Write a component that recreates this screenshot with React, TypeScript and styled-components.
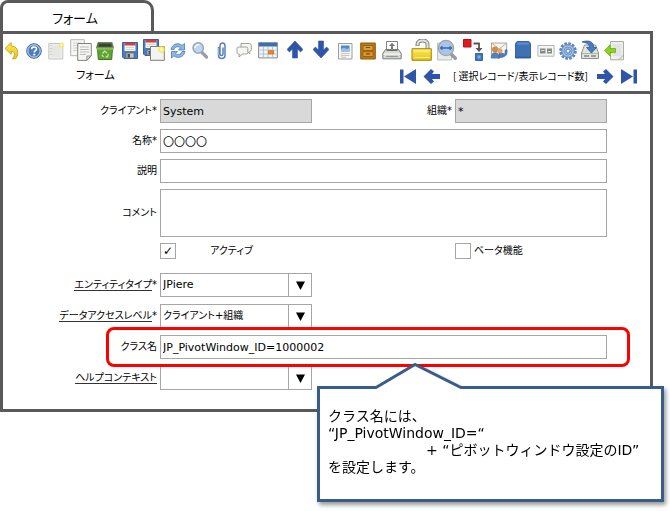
import React from "react";
import styled, { createGlobalStyle } from "styled-components";

const LINE = "#595959";
const BLUE = "#2f55a8";

const GlobalStyle = createGlobalStyle`
  * { box-sizing: border-box; }
  body {
    margin: 0;
    background: #fff;
    color: #000;
    font-family: "DejaVu Sans", "Noto Sans CJK JP", sans-serif;
    font-size: 11px;
    line-height: 16px;
  }
  input, select, textarea, button { font: inherit; color: inherit; margin: 0; }
`;

const Page = styled.main`
  min-height: 100vh;
  padding: 0 17px 99px 0;
`;

const Tab = styled.h1`
  width: 154px;
  height: 31px;
  margin: 0;
  padding: 6px 4px 0 0;
  border: 3px solid ${LINE};
  border-bottom: 0;
  border-radius: 8px 10px 0 0;
  font-size: 13px;
  font-weight: 400;
  line-height: 18px;
  text-align: center;
  font-family: "Noto Sans CJK JP", sans-serif;
  font-feature-settings: "palt";
`;

const Panel = styled.section`
  border: 3px solid ${LINE};
`;

const Header = styled.header`
  border-bottom: 3px solid ${LINE};
  padding-top: 5px;
`;

const Toolbar = styled.div`
  display: flex;
  height: 22px;
`;

const ToolButton = styled.button<{ $before: number }>`
  display: flex;
  flex: none;
  margin-left: ${(p) => p.$before}px;
  padding: 0;
  border: 0;
  background: none;
`;

const StatusRow = styled.div`
  display: flex;
  align-items: center;
  height: 30px;
  padding: 0 12px 0 73px;
  font-family: "Noto Sans CJK JP", sans-serif;
  font-feature-settings: "palt";
`;

const WindowName = styled.span`
  margin-right: auto;
  padding-bottom: 4px;
`;

const Records = styled.span`
  margin: 0 9px 0 13px;
  font-size: 10px;
`;

const NavButton = styled.button`
  display: flex;
  padding: 0;
  border: 0;
  background: none;
  & + & { margin-left: 7px; }
`;

const Form = styled.form`
  display: flex;
  flex-direction: column;
  gap: 6px;
  padding: 5px 43px 19px 0;
`;

const Group = styled.div`
  display: flex;
  flex-direction: column;
  gap: 7px;
  padding-top: 8px;
`;

const Row = styled.div`
  position: relative;
  display: grid;
  grid-template-columns: 157px 1fr 143px 1fr;
  align-items: center;
`;

const Label = styled.label<{ $link?: boolean }>`
  padding-right: 3px;
  text-align: right;
  white-space: nowrap;
  font-size: 10px;
  font-feature-settings: "palt";
  span {
    border-bottom: ${(p) => (p.$link ? "1px solid #333" : "0")};
  }
`;

const Field = styled.input<{ $wide?: boolean }>`
  grid-column: ${(p) => (p.$wide ? "2 / -1" : "auto")};
  width: 100%;
  min-width: 0;
  height: 24px;
  padding: 0 2px;
  border: 1px solid #a6a6a6;
  border-radius: 0;
  background: #fff;
  &:read-only { background: #d9d9d9; }
`;

const Memo = styled.textarea`
  grid-column: 2 / -1;
  width: 100%;
  height: 48px;
  border: 1px solid #a6a6a6;
  background: #fff;
  resize: none;
`;

const Combo = styled.div<{ $small?: boolean }>`
  position: relative;
  select {
    display: block;
    width: 100%;
    height: 24px;
    padding: 0 26px 0 2px;
    border: 1px solid #a6a6a6;
    border-radius: 0;
    background: #fff;
    appearance: none;
    font-size: ${(p) => (p.$small ? 10 : 11)}px;
    font-feature-settings: "palt";
  }
`;

const Arrow = styled.span`
  position: absolute;
  top: 1px;
  right: 1px;
  bottom: 1px;
  display: flex;
  align-items: center;
  justify-content: center;
  width: 23px;
  border-left: 1px solid #a6a6a6;
  pointer-events: none;
`;

const CheckCell = styled.div<{ $gap: number }>`
  display: flex;
  align-items: center;
  gap: ${(p) => p.$gap}px;
  height: 16px;
  white-space: nowrap;
`;

const CheckBox = styled.input`
  display: grid;
  place-items: center;
  flex: none;
  width: 16px;
  height: 16px;
  border: 1px solid #a6a6a6;
  background: #fff;
  appearance: none;
  &:checked::before {
    content: "✓";
    font-size: 12px;
    font-weight: 700;
    line-height: 14px;
  }
`;

const Highlight = styled.div`
  position: absolute;
  z-index: 1;
  inset: -8px -23px -8px 103px;
  border: 3px solid #f00;
  border-radius: 8px;
  pointer-events: none;
`;

const Callout = styled.aside`
  position: absolute;
  z-index: 2;
  top: 51px;
  right: -57px;
  width: 347px;
  height: 116px;
  padding: 19px 8px;
  border: 3px solid #385d8a;
  background: #fff;
  filter: drop-shadow(2px 3px 2px rgba(0, 0, 0, 0.4));
  font-size: 14px;
  line-height: 17px;
  p { margin: 0; white-space: nowrap; }
`;

const Indented = styled.p`
  padding-left: 98px;
`;

const Pointer = styled.svg`
  position: absolute;
  top: -26px;
  left: 54px;
`;

const Defs = styled.svg`
  position: absolute;
  width: 0;
  height: 0;
`;

const arrowUp = <path d="M8 2 16 10.5 13.6 13 10.5 10V19H5.5V10L2.4 13 0 10.5Z" fill={BLUE} stroke={BLUE} strokeWidth=".6" />;

const floppy = (
  <>
    <path d="M.5.5h15v16H2L.5 15Z" fill="#4a7cc0" stroke="#3465a4" />
    <path d="M2.5 1h11v8h-11z" fill="#f4f4f2" />
    <path d="M2.5 1h11v2.5h-11z" fill="#e23a32" />
    <path d="M4 5.5h8M4 7.5h8" stroke="#d5d7d5" />
    <path d="M4 11h8v5H4z" fill="#c6c9c4" stroke="#666" strokeWidth=".7" />
    <path d="M5.5 12H8v3.5H5.5z" fill="#4a4d4b" />
  </>
);

const sparkle = (cx: number, cy: number, r: number) => (
  <>
    <circle cx={cx} cy={cy} r={r} fill="#f8e93d" opacity=".75" />
    <circle cx={cx} cy={cy} r={r / 2.2} fill="#fffbb8" />
  </>
);

type Tool = { name: string; w: number; before: number; art: React.ReactNode };

const tools: Tool[] = [
  {
    name: "元に戻す", w: 16, before: 1,
    art: <path d="M1 9.5 7.2 3.5V7C13 7.2 16 12.5 12 19.5L8.5 20C11.5 16 11 12.5 7.2 12.2V15.5Z" fill="url(#gold)" stroke="#c29a08" strokeWidth=".8" />,
  },
  {
    name: "ヘルプ", w: 16, before: 6,
    art: (
      <>
        <circle cx="8" cy="12" r="7.3" fill="#4f7dba" stroke="#3d6cab" />
        <circle cx="8" cy="12" r="6.2" fill="none" stroke="#dce8f5" strokeWidth=".9" />
        <path d="M5.6 10.3C5.6 7.2 10.5 7.3 10.5 10 10.5 11.6 8.2 11.8 8.2 13.5" fill="none" stroke="#fff" strokeWidth="1.6" />
        <path d="M7.2 14.8h2v1.6h-2z" fill="#fff" />
      </>
    ),
  },
  {
    name: "新規", w: 16, before: 6,
    art: (
      <>
        <path d="M.8 4.5h14V20H.8z" fill="#eeeeec" stroke="#c4c6c1" />
        <path d="M2.8 6.5h10V18h-10z" fill="#e6e6e4" />
        <path d="M3 6v12" stroke="#b5b5b5" strokeDasharray="1 2" />
        {sparkle(13.5, 6, 2.6)}
      </>
    ),
  },
  {
    name: "コピー", w: 22, before: 6,
    art: (
      <>
        <path d="M.7.7h13.6v16H.7z" fill="#f7f7f6" stroke="#b4b6b1" />
        <path d="M3 4h8M3 6.5h8M3 9h5M3 11.5h5" stroke="#d0d0ce" />
        <path d="M7.7 4.5h13.6V17l-4.5 4.4H7.7z" fill="#f4f4f3" stroke="#81847e" />
        <path d="M10 8h9M10 10.5h9M10 13h9M10 15.5h6" stroke="#bcbebb" />
        <path d="M21 17h-4.2v4.2z" fill="#ddd" stroke="#777" strokeWidth=".7" />
      </>
    ),
  },
  {
    name: "削除", w: 18, before: 4,
    art: (
      <>
        <path d="M1.5 9h15l-.8 11.500H2.300z" fill="#62a336" stroke="#3f7a1a" />
        <path d="M2 3.500h14L17.500 9H.5z" fill="#55634d" stroke="#6d8560" />
        <path d="M3.500 5h11l1 2.500h-13z" fill="#39432f" />
        <path d="M.5 8.500h17v2.300H.5z" fill="#83bd56" />
        <path d="M6.500 14.500 8.700 12l2.200 2M12.300 14.800l-.7 3H9.500M7.600 17.800 5.800 16" fill="none" stroke="#c6e8ac" strokeWidth="1.200" />
      </>
    ),
  },
  { name: "保存", w: 16, before: 8, art: <g transform="translate(0 3)">{floppy}</g> },
  {
    name: "保存して新規", w: 22, before: 5,
    art: (
      <>
        {floppy}
        <path d="M7.5 7.500h13.800v13.800H7.500z" fill="#f3f3f2" stroke="#7c7f79" />
        {sparkle(18.5, 10.5, 3.4)}
      </>
    ),
  },
  {
    name: "再読込", w: 16, before: 5,
    art: (
      <g stroke="#4a7abd" strokeWidth=".8" fill="#8eb6e3">
        <path d="M1 10.500C2 4.500 9 3.200 12 6.500L14.500 4.500V11H8.500L10.500 8.700C8.300 7 5 7.500 4 10.500Z" />
        <path d="M15 12.500C14 18.500 7 20 4 16.700L1.500 19V12.500h6L5.500 14.700C8 16.500 11 15.500 12 12.500Z" />
      </g>
    ),
  },
  {
    name: "検索", w: 16, before: 6,
    art: (
      <>
        <path d="m10 13.500 4.500 4.500" stroke="#9b9ea5" strokeWidth="3.200" strokeLinecap="round" />
        <circle cx="6.200" cy="9" r="5.200" fill="#b9d6f2" stroke="#9fa4ab" strokeWidth="1.500" />
        <path d="M3 9C3.200 6.500 5 5.500 7.500 5.700" fill="none" stroke="#f2f8ff" strokeWidth="1.500" />
      </>
    ),
  },
  {
    name: "添付", w: 16, before: 6,
    art: (
      <>
        <path d="M4.500 8v8.500c0 4 6.500 4 6.500 0V7C11 3 6 3 6 7v8c0 2 3 2 3 0V8.500" fill="none" stroke="#5681bb" strokeWidth="1.500" />
        <path d="M4.300 9v7" stroke="#a7c4e6" />
      </>
    ),
  },
  {
    name: "チャット", w: 16, before: 6,
    art: (
      <g fill="#f6f6f5" stroke="#94968f" strokeWidth=".9">
        <path d="M5 4.500h8.500q1.800 0 1.800 1.800v4.200q0 1.800-1.800 1.800l.5 2.500-3-2.500H5z" />
        <path d="M2.500 8h7.800q1.500 0 1.500 1.500v4q0 1.500-1.500 1.500H6.500L3 18l.3-3h-.8Q1 15 1 13.500v-4Q1 8 2.500 8Z" />
      </g>
    ),
  },
  {
    name: "カレンダー", w: 20, before: 6,
    art: (
      <>
        <path d="M.6 3.600h18.800v15.300H.6z" fill="#f1f3f5" stroke="#858b93" />
        <path d="M1 4h18v3.500H1z" fill="#3970b3" />
        <path d="M1.500 11h17M1.500 15h17M5.500 8v10M10 8v10M14.500 8v10" stroke="#b5c3d5" />
        <path d="M10.500 11.800h5v3h-5z" fill="#f28a1c" stroke="#d9700f" />
      </>
    ),
  },
  { name: "親レコード", w: 16, before: 9, art: arrowUp },
  { name: "詳細レコード", w: 16, before: 10, art: <g transform="rotate(180 8 10.5)">{arrowUp}</g> },
  {
    name: "レポート", w: 16, before: 8,
    art: (
      <>
        <path d="M1.500 4.500h13.500V20H1.500z" fill="#f5f5f4" stroke="#9da09a" />
        <path d="M4 6.500h8.500v6H4z" fill="#4d86cb" />
        <path d="m4 10 3-1.500 2.500 1.500 3-1v3.500H4z" fill="#9fc0e6" />
        <path d="M4 14.500h8.500M4 16.500h8.500M4 18.200h5" stroke="#c0c2be" strokeWidth=".9" />
      </>
    ),
  },
  {
    name: "アーカイブ", w: 16, before: 7,
    art: (
      <>
        <path d="M.7 4h14.600v16H.7z" fill="#b87818" stroke="#8f5c0c" />
        <path d="M3 6.500h10v5H3zM3 12.700h10v4.800H3z" fill="#db9a38" stroke="#9a6412" />
        <path d="M6 8.500h4M6 14.800h4" stroke="#7a4c08" strokeWidth="1.200" />
      </>
    ),
  },
  {
    name: "印刷", w: 20, before: 6,
    art: (
      <>
        <path d="M4.500 2.500h11V12h-11z" fill="#fff" stroke="#80837e" />
        <path d="m10 3.800 3 3.300h-2V10H9V7.100H7z" fill="#777a76" />
        <path d="m3.500 10.500-2.700 4v5.300h18.400v-5.300l-2.700-4z" fill="#d6d8d3" stroke="#7b7e78" />
        <path d="M4.500 11.500h11" stroke="#6b6e69" />
        <path d="M2 15h16" stroke="#fff" />
        <path d="M4 17.500h12" stroke="#999" strokeWidth="1.200" />
      </>
    ),
  },
  {
    name: "ロック", w: 22, before: 8,
    art: (
      <>
        <path d="M7.500 7V5.500C7.500 0 17.500 0 17.500 5.500V12" fill="none" stroke="#85887f" strokeWidth="4" />
        <path d="M7.500 6.300V5.500C7.500 0 17.500 0 17.500 5.500V12" fill="none" stroke="#e2e3df" strokeWidth="2" />
        <path d="M2 9.700h19.300v11.600H2z" fill="url(#gold)" stroke="#a98500" />
        <path d="M4 12h15.500M4 18.500h15.500" stroke="#fbf39c" />
      </>
    ),
  },
  {
    name: "ズーム", w: 22, before: 4,
    art: (
      <>
        <path d="M1.500 4h14v17h-14z" fill="#e9eae8" stroke="#c0c2bd" />
        <path d="m14.500 14.500 4.800 4.800" stroke="#989ca0" strokeWidth="3.500" strokeLinecap="round" />
        <circle cx="10" cy="9" r="7.600" fill="#a8c6e7" stroke="#a0a5ab" strokeWidth="1.400" />
        <path d="m3.500 9 3-2.500v1.700h7V6.500l3 2.500-3 2.500V9.800h-7v1.700z" fill="#356aae" />
      </>
    ),
  },
  {
    name: "ワークフロー", w: 20, before: 5,
    art: (
      <>
        <path d="M.5.5h7.500V8H.5z" fill="#df1a20" stroke="#b51216" />
        <path d="M10.500 4.500H16V11" fill="none" stroke="#555" strokeWidth="1.800" />
        <path d="M12.500 9h7L16 13z" fill="#555" />
        <path d="M12.500 14.500H19.500V21.500h-7z" fill="#3d77bd" stroke="#3468aa" />
        <path d="M14.500 16.500H17.500V19.500h-3z" fill="#83addd" />
      </>
    ),
  },
  {
    name: "リクエスト", w: 18, before: 7,
    art: (
      <>
        <path d="M1.500 4h15.200v12H1.500z" fill="#f5f5f2" stroke="#a6a89f" />
        <path d="m1.500 4 7.600 6 7.600-6" fill="none" stroke="#b3b5ac" />
        <path d="M.8 18c0-6 8.500-6.500 8.500 0v1.500H.8z" fill="#4f82c0" />
        <path d="M8 19.500c0-5 5-5 6-2" fill="#c95a24" />
        <circle cx="5" cy="10.500" r="3" fill="#d68a42" />
        <circle cx="10" cy="12" r="2.600" fill="#e8a364" />
        <path d="M17 10.500c1 6-4 9-7 7.500l-1 1.500v-5h5l-1.500 1.700c2 0 3-2.500 2.500-5z" fill="#4b80c4" stroke="#2c5c9c" strokeWidth=".5" />
      </>
    ),
  },
  {
    name: "製品情報", w: 18, before: 6,
    art: (
      <>
        <path d="M3 2.500h12L16.500 4.500v14.500h-15V4.500z" fill="#3f72b5" stroke="#3766a6" />
        <path d="M3.500 3.500h11l.8 2H2.700z" fill="#5f8fca" />
        <path d="M1 17.500h16v1.500H1z" fill="#3060a0" />
      </>
    ),
  },
  {
    name: "カスタマイズ", w: 18, before: 5,
    art: (
      <>
        <path d="M.9 6.500h16.200v10.700H.9z" fill="#f5f5f4" stroke="#b4b6b1" />
        <path d="M3 9.500h5.500v5H3zM10 9.500h5v5h-5z" fill="#858987" />
        <path d="M4 11.500h3.500M11 12.500h3" stroke="#ddd" />
      </>
    ),
  },
  {
    name: "プロセス", w: 18, before: 4,
    art: (
      <>
        <circle cx="9" cy="12" r="7.300" fill="none" stroke="#5d86be" strokeWidth="3" strokeDasharray="2.600 1.220" />
        <circle cx="9" cy="12" r="6.300" fill="#a4c1e4" stroke="#5d86be" />
        <circle cx="9" cy="12" r="4" fill="none" stroke="#6e95c7" />
        <circle cx="9" cy="12" r="2" fill="#fff" stroke="#4d75ad" />
      </>
    ),
  },
  {
    name: "エクスポート", w: 18, before: 4,
    art: (
      <>
        <path d="M3.500 6h11L17.500 14v5.500H.5V14z" fill="#e1e3df" stroke="#8d908a" />
        <path d="M1 14.500h16" stroke="#b0b3ad" />
        <path d="M3 17h5M10 17h5" stroke="#858883" strokeWidth="1.400" />
        <path d="M1 3C8 .5 13 3 12.500 8.500H15.500L10.500 14 5.500 8.500H8.500C8.500 5.500 6 3.500 1 3Z" fill="#477fbc" stroke="#25578f" strokeWidth=".8" />
      </>
    ),
  },
  {
    name: "インポート", w: 20, before: 5,
    art: (
      <>
        <path d="M6.500 2.500h13v18.300h-13z" fill="#efefed" stroke="#aaada7" />
        <path d="M8.500 5h9v12h-9z" fill="#e3e4e1" />
        <path d="m15 20.500 4.500-4.500" stroke="#aaa" />
        <path d="m.5 11.500 5.500-5.500v3.500h5.500v4H6V17z" fill="#8bd41e" stroke="#6cae12" strokeWidth=".8" />
      </>
    ),
  },
];

const navArrow = <path d="M9 0 16.500 7.500 9 15 6 12.500 8 10H0V5H8L6 2.500Z" fill={BLUE} />;
const navEnd = <path d="M0 0 12 7.500 0 15ZM12.500.5H16v14h-3.500z" fill={BLUE} />;

function Nav({ name, back, end }: { name: string; back?: boolean; end?: boolean }) {
  return (
    <NavButton type="button" aria-label={name}>
      <svg width="17" height="15" viewBox="0 0 17 15">
        <g transform={back ? "translate(17 0) scale(-1 1)" : undefined}>{end ? navEnd : navArrow}</g>
      </svg>
    </NavButton>
  );
}

type SelectProps = { id: string; label: string; required?: boolean; small?: boolean; value: string };

function Select({ id, label, required, small, value }: SelectProps) {
  return (
    <Row>
      <Label htmlFor={id} $link>
        <span>{label}</span>
        {required && "*"}
      </Label>
      <Combo $small={small}>
        <select id={id} defaultValue={value}>
          <option>{value}</option>
        </select>
        <Arrow aria-hidden="true">
          <svg width="9" height="9" viewBox="0 0 9 9"><path d="M0 .5h9L4.500 9z" fill="#000" /></svg>
        </Arrow>
      </Combo>
    </Row>
  );
}

export default function App() {
  return (
    <Page>
      <GlobalStyle />
      <Defs aria-hidden="true">
        <defs>
          <linearGradient id="gold" x1="0" y1="0" x2="0" y2="1">
            <stop offset="0" stopColor="#f9e75a" />
            <stop offset="1" stopColor="#e8c415" />
          </linearGradient>
        </defs>
      </Defs>
      <Tab>フォーム</Tab>
      <Panel>
        <Header>
          <Toolbar role="toolbar">
            {tools.map((t) => (
              <ToolButton key={t.name} type="button" aria-label={t.name} $before={t.before}>
                <svg width={t.w} height="22" viewBox={`0 0 ${t.w} 22`}>{t.art}</svg>
              </ToolButton>
            ))}
          </Toolbar>
          <StatusRow>
            <WindowName>フォーム</WindowName>
            <Nav name="最初" back end />
            <Nav name="前へ" back />
            <Records>[ 選択レコード/表示レコード数]</Records>
            <Nav name="次へ" />
            <Nav name="最後" end />
          </StatusRow>
        </Header>
        <Form>
          <Row>
            <Label htmlFor="client">クライアント*</Label>
            <Field id="client" readOnly defaultValue="System" />
            <Label htmlFor="org">組織*</Label>
            <Field id="org" readOnly defaultValue="*" />
          </Row>
          <Row>
            <Label htmlFor="name">名称*</Label>
            <Field id="name" $wide defaultValue="〇〇〇〇" />
          </Row>
          <Row>
            <Label htmlFor="description">説明</Label>
            <Field id="description" $wide />
          </Row>
          <Row>
            <Label htmlFor="comment">コメント</Label>
            <Memo id="comment" />
          </Row>
          <Row>
            <span />
            <CheckCell $gap={34}>
              <CheckBox id="active" type="checkbox" defaultChecked />
              <Label htmlFor="active">アクティブ</Label>
            </CheckCell>
            <span />
            <CheckCell $gap={3}>
              <CheckBox id="beta" type="checkbox" />
              <Label htmlFor="beta">ベータ機能</Label>
            </CheckCell>
          </Row>
          <Group>
            <Select id="entity" label="エンティティタイプ" required value="JPiere" />
            <Select id="access" label="データアクセスレベル" required small value="クライアント+組織" />
            <Row>
              <Label htmlFor="classname">クラス名</Label>
              <Field id="classname" $wide defaultValue="JP_PivotWindow_ID=1000002" />
              <Highlight />
              <Callout>
                <Pointer width="90" height="27" viewBox="0 0 90 27">
                  <path d="M1 27V24.500L41 1.500 88 24.500V27Z" fill="#fff" />
                  <path d="M0 24.500H2L41 1.500 87 24.500H90" fill="none" stroke="#385d8a" strokeWidth="3" />
                </Pointer>
                <p>クラス名には、</p>
                <p>“JP_PivotWindow_ID=“</p>
                <Indented>+ “ピボットウィンドウ設定のID”</Indented>
                <p>を設定します。</p>
              </Callout>
            </Row>
            <Select id="help" label="ヘルプコンテキスト" value="" />
          </Group>
        </Form>
      </Panel>
    </Page>
  );
}
